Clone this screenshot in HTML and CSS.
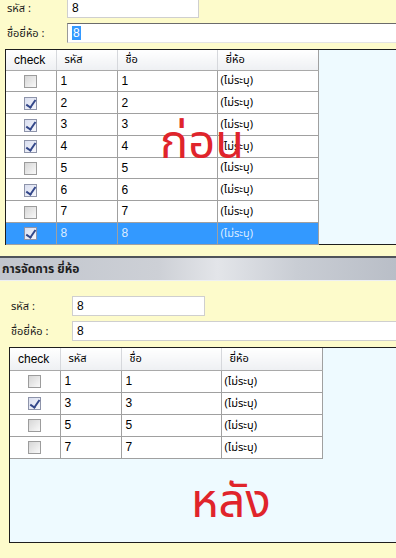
FILE: index.html
```html
<!DOCTYPE html>
<html lang="th">
<head>
    <meta charset="UTF-8">
    <meta name="viewport" content="width=device-width, initial-scale=1.0">
    <title>การจัดการ ยี่ห้อ - ก่อน / หลัง</title>
    <link rel="stylesheet" href="styles.css">
</head>
<body>

    <!-- Before: brand form with all rows -->
    <div class="shot shot-before">
        <div class="fields">
            <div class="field">
                <span class="field-label">รหัส :</span>
                <div class="text-box box-short">8</div>
            </div>
            <div class="field">
                <span class="field-label">ชื่อยี่ห้อ :</span>
                <div class="text-box box-long box-focus"><span class="sel">8</span></div>
            </div>
        </div>
        <div class="grid-box">
            <table class="grid">
                <thead>
                    <tr><th class="col-check">check</th><th class="col-id">รหัส</th><th class="col-name">ชื่อ</th><th class="col-brand">ยี่ห้อ</th></tr>
                </thead>
                <tbody>
                    <tr><td class="cell-check"><span class="cb"></span></td><td>1</td><td>1</td><td>(ไม่ระบุ)</td></tr>
                    <tr><td class="cell-check"><span class="cb on"></span></td><td>2</td><td>2</td><td>(ไม่ระบุ)</td></tr>
                    <tr><td class="cell-check"><span class="cb on"></span></td><td>3</td><td>3</td><td>(ไม่ระบุ)</td></tr>
                    <tr><td class="cell-check"><span class="cb on"></span></td><td>4</td><td>4</td><td>(ไม่ระบุ)</td></tr>
                    <tr><td class="cell-check"><span class="cb"></span></td><td>5</td><td>5</td><td>(ไม่ระบุ)</td></tr>
                    <tr><td class="cell-check"><span class="cb on"></span></td><td>6</td><td>6</td><td>(ไม่ระบุ)</td></tr>
                    <tr><td class="cell-check"><span class="cb"></span></td><td>7</td><td>7</td><td>(ไม่ระบุ)</td></tr>
                    <tr class="row-selected"><td class="cell-check"><span class="cb on"></span></td><td>8</td><td>8</td><td>(ไม่ระบุ)</td></tr>
                </tbody>
            </table>
            <div class="stamp stamp-before">ก่อน</div>
        </div>
    </div>

    <!-- After: checked rows removed -->
    <div class="shot shot-after">
        <div class="title-bar">การจัดการ ยี่ห้อ</div>
        <div class="fields">
            <div class="field">
                <span class="field-label">รหัส :</span>
                <div class="text-box box-short">8</div>
            </div>
            <div class="field">
                <span class="field-label">ชื่อยี่ห้อ :</span>
                <div class="text-box box-long">8</div>
            </div>
        </div>
        <div class="grid-box">
            <table class="grid">
                <thead>
                    <tr><th class="col-check">check</th><th class="col-id">รหัส</th><th class="col-name">ชื่อ</th><th class="col-brand">ยี่ห้อ</th></tr>
                </thead>
                <tbody>
                    <tr><td class="cell-check"><span class="cb"></span></td><td>1</td><td>1</td><td>(ไม่ระบุ)</td></tr>
                    <tr><td class="cell-check"><span class="cb on"></span></td><td>3</td><td>3</td><td>(ไม่ระบุ)</td></tr>
                    <tr><td class="cell-check"><span class="cb"></span></td><td>5</td><td>5</td><td>(ไม่ระบุ)</td></tr>
                    <tr><td class="cell-check"><span class="cb"></span></td><td>7</td><td>7</td><td>(ไม่ระบุ)</td></tr>
                </tbody>
            </table>
            <div class="stamp stamp-after">หลัง</div>
        </div>
    </div>

</body>
</html>
```

FILE: styles.css
```css
* {
    box-sizing: border-box;
}
body {
    margin: 0;
    width: 396px;
    height: 558px;
    overflow: hidden;
    background-color: #fdfbcb;
    font-family: Tahoma, "Noto Sans Thai", "Liberation Sans", sans-serif;
    font-size: 12px;
    color: #000;
}

/* shared form pieces */
.field {
    display: flex;
    align-items: center;
    height: 20px;
}
.field + .field {
    margin-top: 5px;
}
.field-label {
    font-size: 11px;
    color: #1a1a1a;
}
.text-box {
    height: 20px;
    line-height: 18px;
    padding-left: 4px;
    background-color: #fff;
    border: 1px solid #cfcfcf;
    font-family: "Liberation Sans", Arial, sans-serif;
}
.box-long {
    flex: 1;
    margin-right: -10px;
}
.box-focus {
    border-top-color: #6b6b6b;
    border-left-color: #9a9a9a;
    border-bottom-color: #e4e4e4;
}
.sel {
    background-color: #3399ff;
    color: #fff;
    padding: 0 1px;
}

/* data grid */
.grid-box {
    position: relative;
    height: 196px;
    margin-right: -10px;
    background-color: #eefaff;
    border: 1px solid #1e1e1e;
}
.grid {
    border-collapse: collapse;
    table-layout: fixed;
    width: 312px;
    font-family: "Liberation Sans", Arial, sans-serif;
}
.col-check { width: 50px; }
.col-id { width: 61px; }
.col-name { width: 100px; }
.col-brand { width: 101px; }
.grid th {
    height: 20px;
    padding: 0 0 0 8px;
    text-align: left;
    font-family: Tahoma, "Noto Sans Thai", sans-serif;
    font-size: 11px;
    font-weight: normal;
    background: linear-gradient(#ffffff, #eef0f3);
    border-right: 1px solid #d6d8dc;
    border-bottom: 1px solid #a9a9a9;
}
.grid th.col-check {
    padding-left: 8px;
    font-family: "Liberation Sans", Arial, sans-serif;
    font-size: 12px;
}
.grid th:last-child {
    border-right-color: #a0a0a0;
}
.grid td {
    height: 22px;
    padding: 0 0 0 4px;
    background-color: #fff;
    border-right: 1px solid #a0a0a0;
    border-bottom: 1px solid #a0a0a0;
}
.grid td:last-child {
    padding-left: 3px;
    font-family: Tahoma, "Noto Sans Thai", sans-serif;
    font-size: 11px;
}
.grid .cell-check {
    padding: 0;
    text-align: center;
}
.row-selected td {
    background-color: #3399ff;
    color: #dcecff;
}

/* checkbox */
.cb {
    position: relative;
    display: inline-block;
    width: 13px;
    height: 13px;
    vertical-align: middle;
    border: 1px solid #9c9c9c;
    background: linear-gradient(135deg, #d6d6d6, #f9f9f9);
}
.cb.on {
    border-color: #8e94aa;
    background: linear-gradient(135deg, #d9def0, #f6f7fc);
}
.cb.on::after {
    content: "";
    position: absolute;
    left: 3px;
    top: 0;
    width: 4px;
    height: 8px;
    border: solid #33478a;
    border-width: 0 2px 2px 0;
    transform: rotate(35deg);
}

/* big red annotations */
.stamp {
    position: absolute;
    font-family: Tahoma, "Noto Sans Thai", sans-serif;
    font-size: 47px;
    line-height: 1;
    color: #e0242b;
}
.stamp-before {
    left: 154px;
    top: 70px;
}
.stamp-after {
    left: 181px;
    top: 131px;
}

/* before shot */
.shot-before {
    padding-bottom: 11px;
}
.shot-before .fields {
    margin-top: -2px;
    padding-left: 7px;
}
.shot-before .field-label {
    width: 60px;
}
.shot-before .box-short {
    width: 132px;
}
.shot-before .grid-box {
    margin-top: 6px;
    margin-left: 5px;
}
.shot-before .grid td {
    height: 21.75px;
}

/* after shot */
.title-bar {
    height: 25px;
    padding-left: 2px;
    line-height: 22px;
    font-weight: bold;
    color: #1e1e1e;
    border-top: 2px solid #4f535a;
    border-bottom: 1px solid #eef0f2;
    background: linear-gradient(90deg, #c1c5cd 0%, #cdd0d6 40%, #e3e5e9 55%, #c9cdd4 75%, #b9bec7 100%);
}
.shot-after .fields {
    padding-top: 15px;
    padding-left: 11px;
}
.shot-after .field-label {
    width: 61px;
}
.shot-after .box-short {
    width: 133px;
}
.shot-after .grid-box {
    margin-top: 6px;
    margin-left: 9px;
}
.shot-after .grid th {
    height: 22px;
}
```
